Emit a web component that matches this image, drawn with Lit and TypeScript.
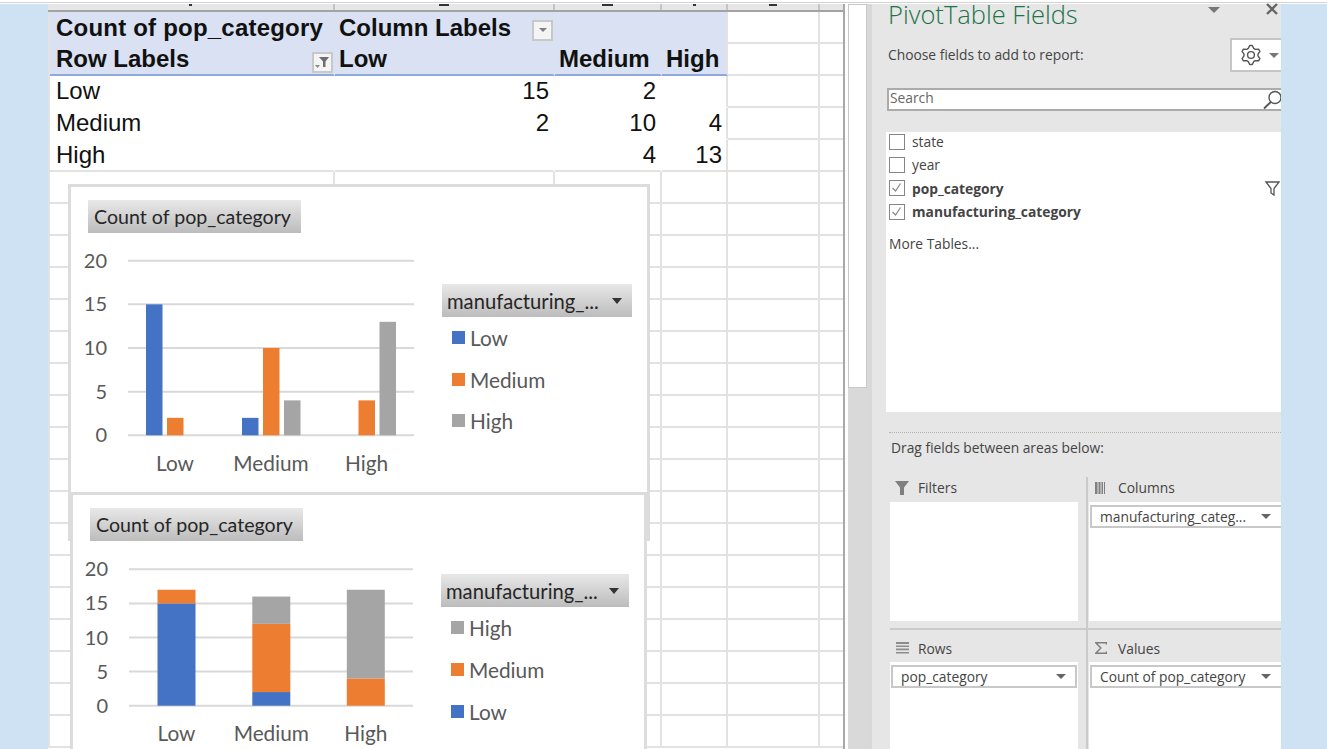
import { LitElement, html, css, svg } from 'lit';
import { customElement, property } from 'lit/decorators.js';

const BLUE = '#4472c4';
const ORANGE = '#ed7d31';
const GRAY = '#a5a5a5';

type Cell = string | number | null;

const PIVOT: Cell[][] = [
	['Count of pop_category', 'Column Labels', null, null],
	['Row Labels', 'Low', 'Medium', 'High'],
	['Low', 15, 2, null],
	['Medium', 2, 10, 4],
	['High', null, 4, 13],
];
const ROW_COUNT = 23;
const COL_COUNT = 6;
const HEADER_MARKS = [3, 10, 11, 3, 8, 0];

@customElement('bar-chart')
export class BarChart extends LitElement {
	@property({ type: Boolean }) stacked = false;

	static styles = css`
		:host {
			display: block;
		}
		.chart {
			display: grid;
			height: 100%;
			box-sizing: border-box;
			border: 3px solid #dcdcdc;
			background: #fff;
			padding: 13px 0 0 17px;
			font-family: Lato, 'Open Sans', sans-serif;
			color: #595959;
		}
		.chart.clustered {
			grid-template-columns: 354px 190px;
		}
		.chart.stacked {
			grid-template-columns: 351px 188px;
		}
		.title {
			width: 213px;
			height: 33px;
			display: flex;
			align-items: center;
			padding-left: 6px;
			box-sizing: border-box;
			font-size: 19.6px;
			color: #262626;
			background: linear-gradient(#e8e8e8, #bcbcbc);
			white-space: nowrap;
		}
		svg.plot {
			display: block;
			width: 340px;
			height: 240px;
			margin-top: 12px;
			overflow: visible;
		}
		svg.plot text {
			font-size: 20px;
			fill: #595959;
		}
		svg.plot text.cat {
			font-size: 20.8px;
		}
		.legend {
			padding-top: 84px;
		}
		.stacked .legend {
			padding-top: 66px;
		}
		.field {
			height: 33px;
			display: flex;
			align-items: center;
			justify-content: space-between;
			padding: 0 10px 0 5px;
			font-size: 20.2px;
			color: #262626;
			background: linear-gradient(#e8e8e8, #bcbcbc);
			white-space: nowrap;
		}
		.arrow {
			width: 0;
			height: 0;
			border: 5.5px solid transparent;
			border-top: 6px solid #333;
			border-bottom: 0;
		}
		.entries {
			padding-left: 10px;
		}
		.entry {
			height: 41.5px;
			display: flex;
			align-items: center;
			gap: 5px;
			font-size: 20.8px;
		}
		.stacked .entries {
			margin-top: -1px;
		}
		.stacked .entry {
			height: 42px;
		}
		.swatch {
			width: 13px;
			height: 13px;
		}
	`;

	private plot() {
		const stacked = this.stacked;
		const top = stacked ? 16.3 : 15.7;
		const base = stacked ? 152.7 : 190.3;
		const x0 = stacked ? 39 : 40;
		const x1 = stacked ? 323 : 326;
		const k = (base - top) / 20;
		const groups: { label: string; cx: number; values: number[] }[] = stacked
			? [
					{ label: 'Low', cx: 86.5, values: [15, 2, 0] },
					{ label: 'Medium', cx: 181.3, values: [2, 10, 4] },
					{ label: 'High', cx: 275.8, values: [0, 4, 13] },
				]
			: [
					{ label: 'Low', cx: 87, values: [15, 2, 0] },
					{ label: 'Medium', cx: 183, values: [2, 10, 4] },
					{ label: 'High', cx: 278.5, values: [0, 4, 13] },
				];
		const colors = [BLUE, ORANGE, GRAY];
		const labelX = stacked ? 18 : 19;
		const catY = base + (stacked ? 35 : 35.5);
		return html`<svg class="plot" viewBox="0 0 340 240">
			${[0, 5, 10, 15, 20].map((v) => {
				const y = base - v * k;
				return svg`<line x1=${x0} x2=${x1} y1=${y} y2=${y} stroke="#d9d9d9" stroke-width="2"></line>
					<text x=${labelX} y=${y + 7} text-anchor="end">${v}</text>`;
			})}
			${groups.map((g) => {
				let acc = 0;
				const bars = g.values.map((v, i) => {
					if (!v) return null;
					if (stacked) {
						const y = base - (acc + v) * k;
						acc += v;
						return svg`<rect x=${g.cx - 19} y=${y} width="38" height=${v * k} fill=${colors[i]}></rect>`;
					}
					return svg`<rect x=${g.cx - 29 + i * 21} y=${base - v * k} width="16.5" height=${v * k} fill=${colors[i]}></rect>`;
				});
				return svg`${bars}<text class="cat" x=${g.cx} y=${catY} text-anchor="middle">${g.label}</text>`;
			})}
		</svg>`;
	}

	render() {
		const entries = [
			{ label: 'Low', color: BLUE },
			{ label: 'Medium', color: ORANGE },
			{ label: 'High', color: GRAY },
		];
		if (this.stacked) entries.reverse();
		return html`<div class="chart ${this.stacked ? 'stacked' : 'clustered'}">
			<div>
				<div class="title">Count of pop_category</div>
				${this.plot()}
			</div>
			<div class="legend">
				<div class="field">manufacturing_... <span class="arrow"></span></div>
				<div class="entries">
					${entries.map(
						(e) => html`<div class="entry"><span class="swatch" style="background:${e.color}"></span>${e.label}</div>`
					)}
				</div>
			</div>
		</div>`;
	}
}

@customElement('field-pane')
export class FieldPane extends LitElement {
	static styles = css`
		:host {
			display: block;
			width: 414px;
			height: 745px;
			box-sizing: border-box;
			border-left: 5px solid #d8d8d8;
			background: #e6e6e6;
			overflow-x: clip;
			font-family: 'Open Sans', 'Noto Sans', sans-serif;
			font-size: 13.8px;
			color: #444;
		}
		.head {
			height: 20px;
			display: flex;
			align-items: flex-start;
			padding-left: 16px;
			color: #217346;
			font-size: 25.5px;
			font-weight: 300;
			white-space: nowrap;
		}
		.head .name {
			flex: 1;
			line-height: 24px;
			margin-top: -2px;
		}
		.head .tri {
			margin: 3px 45px 0 0;
		}
		.head svg {
			margin: -2px 2px 0 0;
		}
		.tri {
			width: 0;
			height: 0;
			border: 6px solid transparent;
			border-top: 6px solid #777;
			border-bottom: 0;
		}
		.choose {
			display: flex;
			align-items: center;
			justify-content: space-between;
			padding-left: 16px;
			margin-top: 14px;
			height: 34px;
		}
		.choose > span {
			margin-top: -2px;
		}
		.gear {
			width: 51px;
			height: 34px;
			box-sizing: border-box;
			background: #fff;
			border: 2px solid #c6c6c6;
			border-right: 0;
			display: flex;
			align-items: center;
			gap: 7px;
			padding-left: 8px;
		}
		.gear .tri {
			border-width: 5.5px;
			border-top-width: 5px;
			border-bottom: 0;
			border-top-color: #777;
			border-left-color: transparent;
			border-right-color: transparent;
		}
		.search {
			margin: 16px 0 0 15px;
			height: 23px;
			box-sizing: border-box;
			background: #fff;
			border: 2px solid #ababab;
			border-right: 0;
			display: flex;
			align-items: center;
			justify-content: space-between;
			padding-left: 1px;
			color: #666;
		}
		.search > span {
			margin-top: -4px;
		}
		.list {
			margin: 21px 0 0 14px;
			height: 280px;
			background: #fff;
			padding-left: 3px;
			box-sizing: border-box;
		}
		.item {
			height: 23.33px;
			box-sizing: border-box;
			padding: 0 1px 4px 0;
			display: flex;
			align-items: center;
			gap: 7px;
		}
		.item.on {
			font-weight: 700;
		}
		.item .label {
			flex: 1;
		}
		.box {
			width: 16px;
			height: 16px;
			box-sizing: border-box;
			border: 1.5px solid #858585;
			display: flex;
		}
		.more {
			margin-top: 9px;
		}
		.dots {
			margin: 20px 0 0 17px;
			border-top: 1px dotted #b0b0b0;
		}
		.drag {
			margin: 5px 0 0 19px;
			height: 19px;
			line-height: 19px;
		}
		.areas {
			display: grid;
			grid-template-columns: 214px 1fr;
			margin: 20px 0 0 0;
		}
		.area {
			margin-left: 18px;
		}
		.area.right {
			margin-left: 0;
			padding-left: 1px;
			border-left: 2px solid #cacaca;
		}
		.area.upper {
			padding-bottom: 7px;
			border-bottom: 2px solid #cacaca;
		}
		.area-head {
			display: flex;
			align-items: center;
			gap: 9px;
			height: 25px;
			padding: 0 0 4px 5px;
			box-sizing: border-box;
		}
		.right .area-head {
			padding-left: 6px;
			gap: 11px;
		}
		.lower .area-head {
			height: 32px;
			padding: 4px 0 0 6px;
		}
		.area-box {
			width: 188px;
			height: 119px;
			background: #fff;
			padding: 3px 1px;
			box-sizing: border-box;
		}
		.right .area-box {
			width: 200px;
		}
		.lower .area-box {
			height: 90px;
		}
		.pill {
			height: 23px;
			box-sizing: border-box;
			border: 2px solid #c8c8c8;
			display: flex;
			align-items: center;
			justify-content: space-between;
			padding: 0 9px 0 8px;
			white-space: nowrap;
		}
		.right .pill {
			padding-right: 15px;
		}
		.pill .tri {
			border-width: 5px;
			border-top-width: 5px;
			border-bottom: 0;
			border-top-color: #666;
			border-left-color: transparent;
			border-right-color: transparent;
		}
	`;

	private gearPath() {
		// six lobes round a centre, as in the Office settings glyph
		const pts: string[] = [];
		for (let i = 0; i < 24; i++) {
			const a = ((i * 15 - 90) * Math.PI) / 180;
			const phase = i % 4;
			const r = phase === 0 || phase === 1 ? 9.6 : 7.1;
			const shifted = a - (7.5 * Math.PI) / 180;
			pts.push(`${(11 + r * Math.cos(shifted)).toFixed(1)} ${(11 + r * Math.sin(shifted)).toFixed(1)}`);
		}
		return `M${pts.join('L')}Z`;
	}

	private item(label: string, on: boolean, filtered = false) {
		return html`<div class="item ${on ? 'on' : ''}">
			<span class="box">
				${on
					? html`<svg width="13" height="13" viewBox="0 0 13 13"><path d="M2.5 7l3 3 5-7.5" fill="none" stroke="#8a8a8a" stroke-width="1.3"/></svg>`
					: null}
			</span>
			<span class="label">${label}</span>
			${filtered
				? html`<svg width="15" height="15" viewBox="0 0 15 15"><path d="M1 1h13L9 7.5V14L6 12V7.5z" fill="none" stroke="#555" stroke-width="1.3"/></svg>`
				: null}
		</div>`;
	}

	private pill(text: string) {
		return html`<div class="pill"><span>${text}</span><span class="tri"></span></div>`;
	}

	render() {
		return html`
			<div class="head">
				<span class="name">PivotTable Fields</span>
				<span class="tri"></span>
				<svg width="14" height="14" viewBox="0 0 14 14"><path d="M2 2l10 10M12 2L2 12" stroke="#666" stroke-width="2.4"/></svg>
			</div>
			<div class="choose">
				<span>Choose fields to add to report:</span>
				<div class="gear">
					<svg width="22" height="22" viewBox="0 0 22 22">
						<path d=${this.gearPath()} fill="none" stroke="#555" stroke-width="1.4" stroke-linejoin="round"/>
						<circle cx="11" cy="11" r="3.4" fill="none" stroke="#555" stroke-width="1.4"/>
					</svg>
					<span class="tri"></span>
				</div>
			</div>
			<div class="search">
				<span>Search</span>
				<svg width="18" height="20" viewBox="0 0 18 20"><circle cx="12" cy="7.5" r="6" fill="none" stroke="#555" stroke-width="1.4"/><path d="M7.8 12L1 18.5" stroke="#555" stroke-width="1.8"/></svg>
			</div>
			<div class="list">
				${this.item('state', false)}
				${this.item('year', false)}
				${this.item('pop_category', true, true)}
				${this.item('manufacturing_category', true)}
				<div class="more">More Tables...</div>
			</div>
			<div class="dots"></div>
			<div class="drag">Drag fields between areas below:</div>
			<div class="areas">
				<div class="area upper">
					<div class="area-head">
						<svg width="14" height="14" viewBox="0 0 14 14"><path d="M0 0h14L9 6.5V14L5 14V6.5z" fill="#7f7f7f"/></svg>
						Filters
					</div>
					<div class="area-box"></div>
				</div>
				<div class="area upper right">
					<div class="area-head">
						<svg width="12" height="12" viewBox="0 0 12 12"><path d="M0 0h2.5v12H0zM3.5 0h2v12h-2zM6.5 0h1.5v12H6.5zM9 0h1v12H9z" fill="#7f7f7f"/></svg>
						Columns
					</div>
					<div class="area-box">${this.pill('manufacturing_categ...')}</div>
				</div>
				<div class="area lower">
					<div class="area-head">
						<svg width="13" height="12" viewBox="0 0 13 12"><path d="M0 0h13v2H0zM0 3.4h13v1.6H0zM0 6.6h13v1.6H0zM0 10h13v1.6H0z" fill="#8c8c8c"/></svg>
						Rows
					</div>
					<div class="area-box">${this.pill('pop_category')}</div>
				</div>
				<div class="area lower right">
					<div class="area-head">
						<svg width="12" height="12" viewBox="0 0 12 12"><path d="M11.5 2.5V.8H.8l5 5.2-5 5.2h10.7V9.5" fill="none" stroke="#7f7f7f" stroke-width="1.5"/></svg>
						Values
					</div>
					<div class="area-box">${this.pill('Count of pop_category')}</div>
				</div>
			</div>
		`;
	}
}

@customElement('app-root')
export class AppRoot extends LitElement {
	static styles = css`
		:host {
			display: block;
			width: 1327px;
			height: 749px;
			overflow: hidden;
			background: #fff;
		}
		.rule {
			height: 2px;
			border-bottom: 1px solid #d2d2d2;
			margin-bottom: 1px;
		}
		.window {
			display: flex;
			height: 745px;
			background: #cfe2f3;
			padding: 0 46px 0 48px;
		}
		.sheet {
			position: relative;
			width: 797px;
			box-sizing: border-box;
			border-right: 2px solid #a8a8a8;
			background: #fff;
			overflow: hidden;
			font-family: 'Liberation Sans', Arial, sans-serif;
			font-size: 24px;
			color: #111;
		}
		.cols {
			display: grid;
			grid-template-columns: 287px 220px 107px 66px 92px 23px;
			height: 8px;
			box-sizing: border-box;
			background: #e6e6e6;
			border-bottom: 2px solid #a3a3a3;
		}
		.cols div {
			border-right: 2px solid #c4c4c4;
			display: flex;
			justify-content: center;
		}
		.cols div:last-child {
			border-right: 0;
		}
		.cols span {
			height: 1.5px;
			background: #333;
		}
		.grid {
			display: grid;
			grid-template-columns: 285px 220px 107px 66px 92px 23px;
			grid-auto-rows: 32px;
			border-left: 2px solid #e2e2e2;
		}
		.cell {
			box-sizing: border-box;
			border-right: 2px solid #e2e2e2;
			border-bottom: 2px solid #e2e2e2;
			display: flex;
			align-items: center;
			justify-content: space-between;
			padding: 0 4px;
			white-space: nowrap;
		}
		.first {
			padding-left: 6px;
		}
		.cell.last {
			border-right: 0;
		}
		.cell.pivot {
			border-right-color: transparent;
		}
		.cell.edge {
			border-right-color: #e2e2e2;
		}
		.cell.open {
			border-bottom-color: transparent;
		}
		.cell.head {
			background: #d9e1f2;
			font-weight: 700;
			border-bottom-color: #d9e1f2;
		}
		.cell.top-row {
			padding-top: 2px;
		}
		.cell.top-row.first {
			letter-spacing: 0.21px;
		}
		.cell.rule-blue {
			border-bottom-color: #8ea9db;
		}
		.cell.num {
			justify-content: flex-end;
		}
		.drop {
			width: 21px;
			height: 21px;
			box-sizing: border-box;
			border: 2px solid #c8c8c8;
			background: #f4f4f4;
			display: flex;
			align-items: center;
			justify-content: center;
			margin: 6px -4px 0 0;
		}
		.top-row .drop {
			margin-top: 4px;
		}
		.drop i {
			width: 0;
			height: 0;
			border: 4.5px solid transparent;
			border-top: 4.5px solid #7f7f7f;
			border-bottom: 0;
		}
		.one {
			position: absolute;
			left: 20px;
			top: 180px;
			width: 582px;
			height: 357px;
		}
		.two {
			position: absolute;
			left: 22px;
			top: 488px;
			width: 577px;
			height: 290px;
		}
		.scroll {
			width: 22px;
			background: #fff;
			padding-left: 3px;
			box-sizing: border-box;
		}
		.track {
			height: 100%;
			background: #d9d9d9;
		}
		.thumb {
			height: 384px;
			box-sizing: border-box;
			background: #fff;
			border: 1px solid #c8c8c8;
		}
	`;

	private cell(r: number, c: number) {
		const value = r < PIVOT.length && c < 4 ? PIVOT[r][c] : null;
		const inPivot = r < PIVOT.length && c < 4;
		const classes = ['cell'];
		if (c === COL_COUNT - 1) classes.push('last');
		if (inPivot) {
			classes.push('pivot');
			if (c === 3) classes.push('edge');
			if (r < PIVOT.length - 1) classes.push('open');
			if (r < 2) classes.push('head');
			if (r === 0) classes.push('top-row');
			if (r === 1) classes.push('rule-blue');
		}
		if (c === 0) classes.push('first');
		if (typeof value === 'number') classes.push('num');
		return html`<div class=${classes.join(' ')}>
			${value === null ? '' : html`<span>${value}</span>`}
			${r === 0 && c === 1
				? html`<span class="drop"><i></i></span>`
				: r === 1 && c === 0
					? html`<span class="drop">
							<svg width="15" height="13" viewBox="0 0 15 13"><path d="M4 1h10L10.5 5.5V11H8V5.5z" fill="#6e6e6e"/><path d="M0 9h5l-2.5 3z" fill="#8c8c8c"/></svg>
						</span>`
					: null}
		</div>`;
	}

	render() {
		const rows = Array.from({ length: ROW_COUNT }, (_, r) => r);
		const cols = Array.from({ length: COL_COUNT }, (_, c) => c);
		return html`
			<div class="rule"></div>
			<div class="window">
				<div class="sheet">
					<div class="cols">
						${HEADER_MARKS.map((w) => html`<div><span style="width:${w}px"></span></div>`)}
					</div>
					<div class="grid">${rows.map((r) => cols.map((c) => this.cell(r, c)))}</div>
					<bar-chart class="one"></bar-chart>
					<bar-chart class="two" stacked></bar-chart>
				</div>
				<div class="scroll">
					<div class="track"><div class="thumb"></div></div>
				</div>
				<field-pane></field-pane>
			</div>
		`;
	}
}
